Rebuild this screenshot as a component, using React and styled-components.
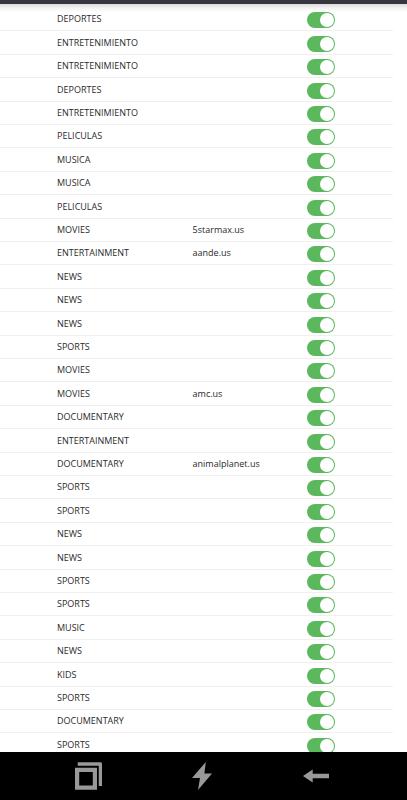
import React, { useState } from "react";
import styled, { createGlobalStyle } from "styled-components";

const GlobalStyle = createGlobalStyle`
  * {
    box-sizing: border-box;
  }
  body {
    margin: 0;
    background: #fff;
    font-family: "Open Sans", "Noto Sans", sans-serif;
  }
`;

const Screen = styled.div`
  display: flex;
  flex-direction: column;
  height: 100vh;
`;

const TopBar = styled.header`
  flex: none;
  height: 4px;
  background: #36363e;
`;

const ListArea = styled.main`
  flex: 1;
  min-height: 0;
  overflow: hidden;
  padding: 4px 14px 0 0;
  background: linear-gradient(#dadadc, #f3f3f4 4px, #fff 8px);
`;

const ChannelTable = styled.table`
  width: 100%;
  table-layout: fixed;
  border-collapse: separate;
  border-spacing: 0;
`;

const Row = styled.tr`
  height: 23px;
  &:nth-child(5n + 2),
  &:nth-child(5n + 4) {
    height: 24px;
  }
`;

const Cell = styled.td`
  width: ${(props) => props.$width};
  padding: ${(props) => props.$pad || "0"};
  border-bottom: 1px solid #f0f0f0;
  color: #2b2b2b;
  font-size: 9px;
  line-height: 12px;
  vertical-align: middle;
`;

const Toggle = styled.input`
  appearance: none;
  display: flex;
  justify-content: ${(props) => (props.checked ? "flex-end" : "flex-start")};
  width: 28px;
  height: 16px;
  margin: 0;
  padding: 1px;
  border-radius: 8px;
  background: ${(props) => (props.checked ? "#5cb85c" : "#ccc")};
  cursor: pointer;
  &::before {
    content: "";
    width: 14px;
    height: 14px;
    border-radius: 50%;
    background: #fff;
  }
`;

const NavBar = styled.nav`
  flex: none;
  display: grid;
  grid-template-columns: repeat(3, 1fr);
  height: 48px;
  padding: 0 34px 0 31px;
  background: #000;
`;

const NavButton = styled.button`
  display: flex;
  align-items: center;
  justify-content: center;
  padding: 0;
  border: none;
  background: transparent;
  color: #999;
  cursor: pointer;
`;

const channels = [
  ["DEPORTES"],
  ["ENTRETENIMIENTO"],
  ["ENTRETENIMIENTO"],
  ["DEPORTES"],
  ["ENTRETENIMIENTO"],
  ["PELICULAS"],
  ["MUSICA"],
  ["MUSICA"],
  ["PELICULAS"],
  ["MOVIES", "5starmax.us"],
  ["ENTERTAINMENT", "aande.us"],
  ["NEWS"],
  ["NEWS"],
  ["NEWS"],
  ["SPORTS"],
  ["MOVIES"],
  ["MOVIES", "amc.us"],
  ["DOCUMENTARY"],
  ["ENTERTAINMENT"],
  ["DOCUMENTARY", "animalplanet.us"],
  ["SPORTS"],
  ["SPORTS"],
  ["NEWS"],
  ["NEWS"],
  ["SPORTS"],
  ["SPORTS"],
  ["MUSIC"],
  ["NEWS"],
  ["KIDS"],
  ["SPORTS"],
  ["DOCUMENTARY"],
  ["SPORTS"],
];

const ChannelRow = ({ group, epg }) => {
  const [enabled, setEnabled] = useState(true);

  return (
    <Row>
      <Cell $width="49%" $pad="0 0 0 57px">
        {group}
      </Cell>
      <Cell $width="29%">{epg}</Cell>
      <Cell $width="22%" $pad="2px 0 0">
        <Toggle
          type="checkbox"
          aria-label={group}
          checked={enabled}
          onChange={() => setEnabled(!enabled)}
        />
      </Cell>
    </Row>
  );
};

const WindowsIcon = () => (
  <svg width="28" height="28" viewBox="0 0 28 28" fill="none" stroke="currentColor">
    <path d="M3.1 7.8h17.8v17.8H3.1z" strokeWidth="4.2" />
    <path d="M3.7 2h22.7v22" strokeWidth="3.3" strokeLinejoin="round" />
  </svg>
);

const BoltIcon = () => (
  <svg width="20" height="28" viewBox="0 0 20 28" fill="currentColor">
    <path d="M13.8 0 0 16h8L6 28 20 11.5h-7.6z" />
  </svg>
);

const BackIcon = () => (
  <svg width="26" height="14" viewBox="0 0 26 14" fill="currentColor">
    <path d="M0 7 9.7.5v4.2H26v4.6H9.7v4.2z" />
  </svg>
);

const App = () => (
  <>
    <GlobalStyle />
    <Screen>
      <TopBar />
      <ListArea>
        <ChannelTable>
          <tbody>
            {channels.map(([group, epg], index) => (
              <ChannelRow key={index} group={group} epg={epg} />
            ))}
          </tbody>
        </ChannelTable>
      </ListArea>
      <NavBar>
        <NavButton aria-label="Windows">
          <WindowsIcon />
        </NavButton>
        <NavButton aria-label="Actions">
          <BoltIcon />
        </NavButton>
        <NavButton aria-label="Back">
          <BackIcon />
        </NavButton>
      </NavBar>
    </Screen>
  </>
);

export default App;
